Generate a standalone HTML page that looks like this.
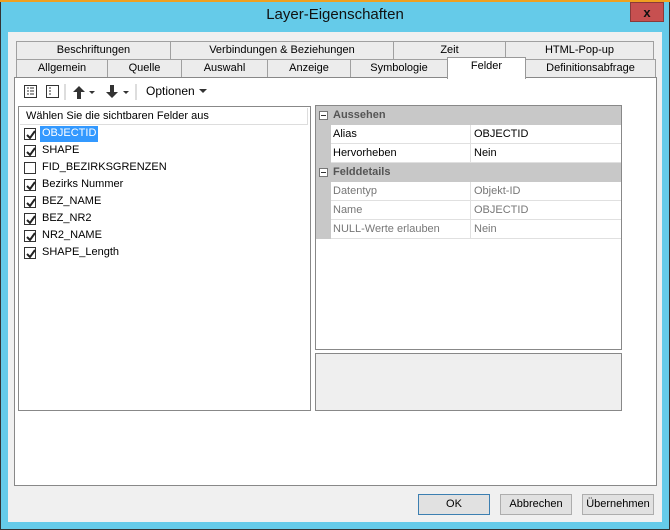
<!DOCTYPE html>
<html><head><meta charset="utf-8"><style>
*{box-sizing:border-box;margin:0;padding:0}
body{width:670px;height:530px;position:relative;background:#65cbe9;font-family:"Liberation Sans",sans-serif;font-size:11px;color:#000;overflow:hidden;white-space:nowrap}
.a{position:absolute}
.tab{position:absolute;height:18px;border:1px solid #a0a0a0;border-bottom:none;background:#ececec;text-align:center;line-height:17px;font-size:11px}
.row{position:absolute;left:0;height:17px;line-height:17px;width:280px}
.cb{position:absolute;left:5px;top:3px;width:12px;height:12px;border:1px solid #333;background:#fff}
.cb svg{position:absolute;left:1px;top:1px}
.g{position:absolute;left:0;width:306px;height:19px;line-height:18px;border-bottom:1px solid #e0e0e0}
.btn{position:absolute;top:494px;width:72px;height:21px;border:1px solid #adadad;background:#e1e1e1;text-align:center;line-height:19px;font-size:11px}
</style></head><body>
<div class="a" style="left:0;top:0;width:670px;height:2px;background:#f0a020"></div>
<div class="a" style="left:0;top:2px;width:1px;height:528px;background:#333"></div>
<div class="a" style="left:669px;top:2px;width:1px;height:528px;background:#333"></div>
<div class="a" style="left:0;top:529px;width:670px;height:1px;background:#333"></div>
<div class="a" style="left:0;top:6px;width:670px;text-align:center;font-size:15px;color:#111">Layer-Eigenschaften</div>
<div class="a" style="left:630px;top:2px;width:34px;height:20px;background:#c75050;text-align:center;font-weight:bold;font-size:13px;line-height:19px;border:1px solid #8a3a3a;color:#111">x</div>
<div class="a" style="left:8px;top:32px;width:654px;height:490px;background:#f0f0f0"></div>
<div class="tab" style="left:16px;top:41px;width:155px">Beschriftungen</div>
<div class="tab" style="left:170px;top:41px;width:224px">Verbindungen &amp; Beziehungen</div>
<div class="tab" style="left:393px;top:41px;width:113px">Zeit</div>
<div class="tab" style="left:505px;top:41px;width:149px">HTML-Pop-up</div>
<div class="tab" style="left:16px;top:59px;width:92px">Allgemein</div>
<div class="tab" style="left:107px;top:59px;width:75px">Quelle</div>
<div class="tab" style="left:181px;top:59px;width:87px">Auswahl</div>
<div class="tab" style="left:267px;top:59px;width:84px">Anzeige</div>
<div class="tab" style="left:350px;top:59px;width:98px">Symbologie</div>
<div class="tab" style="left:525px;top:59px;width:131px">Definitionsabfrage</div>
<div class="a" style="left:14px;top:77px;width:643px;height:409px;background:#fff;border:1px solid #888"></div>
<div class="tab" style="left:447px;top:57px;width:79px;height:22px;background:#fff;line-height:16px;border-color:#999">Felder</div>
<svg class="a" style="left:23px;top:84px" width="180" height="16">
<rect x="1.5" y="1.5" width="12" height="12" fill="#fff" stroke="#333"/><path d="M4 4h2M4 7h2M4 10h2M7 4h4M7 7h4M7 10h4" stroke="#333"/>
<rect x="23.5" y="1.5" width="12" height="12" fill="#fff" stroke="#333"/><path d="M26 4h2M26 7h2M26 10h2" stroke="#333"/>
<path d="M42 0v16" stroke="#bbb"/>
<path d="M56 2l-6 6h4v7h4v-7h4z" fill="#333"/><path d="M66 7h6l-3 3z" fill="#333"/>
<path d="M89 14l-6-6h4v-7h4v7h4z" fill="#333"/><path d="M100 7h6l-3 3z" fill="#333"/>
<path d="M113 0v16" stroke="#bbb"/>
</svg>
<div class="a" style="left:146px;top:84px;font-size:12px">Optionen</div>
<svg class="a" style="left:199px;top:88px" width="9" height="6"><path d="M0 1h8l-4 4z" fill="#333"/></svg>
<div class="a" style="left:18px;top:106px;width:293px;height:305px;background:#fff;border:1px solid #888">
<div class="a" style="left:1px;top:1px;width:288px;height:17px;border-bottom:1px solid #ddd;line-height:16px;padding-left:6px;border-right:1px solid #ddd">Wählen Sie die sichtbaren Felder aus</div>
<div class="a" style="left:0;top:18px;width:290px">
<div class="row" style="top:0"><span class="cb"><svg width="10" height="10"><path d="M1 5l3 3 5-7" stroke="#222" stroke-width="2" fill="none"/></svg></span><span style="position:absolute;left:21px;top:1px;height:16px;line-height:15px;background:#3399ff;color:#fff;padding:0 2px">OBJECTID</span></div>
<div class="row" style="top:17px"><span class="cb"><svg width="10" height="10"><path d="M1 5l3 3 5-7" stroke="#222" stroke-width="2" fill="none"/></svg></span><span style="position:absolute;left:23px">SHAPE</span></div>
<div class="row" style="top:34px"><span class="cb"></span><span style="position:absolute;left:23px">FID_BEZIRKSGRENZEN</span></div>
<div class="row" style="top:51px"><span class="cb"><svg width="10" height="10"><path d="M1 5l3 3 5-7" stroke="#222" stroke-width="2" fill="none"/></svg></span><span style="position:absolute;left:23px">Bezirks Nummer</span></div>
<div class="row" style="top:68px"><span class="cb"><svg width="10" height="10"><path d="M1 5l3 3 5-7" stroke="#222" stroke-width="2" fill="none"/></svg></span><span style="position:absolute;left:23px">BEZ_NAME</span></div>
<div class="row" style="top:85px"><span class="cb"><svg width="10" height="10"><path d="M1 5l3 3 5-7" stroke="#222" stroke-width="2" fill="none"/></svg></span><span style="position:absolute;left:23px">BEZ_NR2</span></div>
<div class="row" style="top:102px"><span class="cb"><svg width="10" height="10"><path d="M1 5l3 3 5-7" stroke="#222" stroke-width="2" fill="none"/></svg></span><span style="position:absolute;left:23px">NR2_NAME</span></div>
<div class="row" style="top:119px"><span class="cb"><svg width="10" height="10"><path d="M1 5l3 3 5-7" stroke="#222" stroke-width="2" fill="none"/></svg></span><span style="position:absolute;left:23px">SHAPE_Length</span></div>
</div></div>
<div class="a" style="left:315px;top:105px;width:307px;height:245px;background:#fff;border:1px solid #888;overflow:hidden">
<div class="a" style="left:0;top:0;width:306px;height:19px;background:#c8c8c8;font-weight:bold;color:#555;line-height:18px;padding-left:17px">Aussehen</div>
<div class="a" style="left:3px;top:5px;width:9px;height:9px;border:1px solid #777;background:#fff"><div style="position:absolute;left:1px;top:3px;width:5px;height:1px;background:#333"></div></div>
<div class="a" style="left:0;top:19px;width:15px;height:38px;background:#c8c8c8"></div>
<div class="g" style="top:19px;left:15px;width:291px"><span style="position:absolute;left:2px">Alias</span><span style="position:absolute;left:139px;top:0;height:18px;border-left:1px solid #e0e0e0;padding-left:3px">OBJECTID</span></div>
<div class="g" style="top:38px;left:15px;width:291px"><span style="position:absolute;left:2px">Hervorheben</span><span style="position:absolute;left:139px;top:0;height:18px;border-left:1px solid #e0e0e0;padding-left:3px">Nein</span></div>
<div class="a" style="left:0;top:57px;width:306px;height:19px;background:#c8c8c8;font-weight:bold;color:#555;line-height:18px;padding-left:17px">Felddetails</div>
<div class="a" style="left:3px;top:62px;width:9px;height:9px;border:1px solid #777;background:#fff"><div style="position:absolute;left:1px;top:3px;width:5px;height:1px;background:#333"></div></div>
<div class="a" style="left:0;top:76px;width:15px;height:57px;background:#c8c8c8"></div>
<div class="g" style="top:76px;left:15px;width:291px;color:#777"><span style="position:absolute;left:2px">Datentyp</span><span style="position:absolute;left:139px;top:0;height:18px;border-left:1px solid #e0e0e0;padding-left:3px">Objekt-ID</span></div>
<div class="g" style="top:95px;left:15px;width:291px;color:#777"><span style="position:absolute;left:2px">Name</span><span style="position:absolute;left:139px;top:0;height:18px;border-left:1px solid #e0e0e0;padding-left:3px">OBJECTID</span></div>
<div class="g" style="top:114px;left:15px;width:291px;color:#777"><span style="position:absolute;left:2px">NULL-Werte erlauben</span><span style="position:absolute;left:139px;top:0;height:18px;border-left:1px solid #e0e0e0;padding-left:3px">Nein</span></div>
</div>
<div class="a" style="left:315px;top:353px;width:307px;height:58px;background:#efefef;border:1px solid #888"></div>
<div class="btn" style="left:418px;border-color:#3c7fb1">OK</div>
<div class="btn" style="left:500px">Abbrechen</div>
<div class="btn" style="left:582px">Übernehmen</div>
</body></html>
